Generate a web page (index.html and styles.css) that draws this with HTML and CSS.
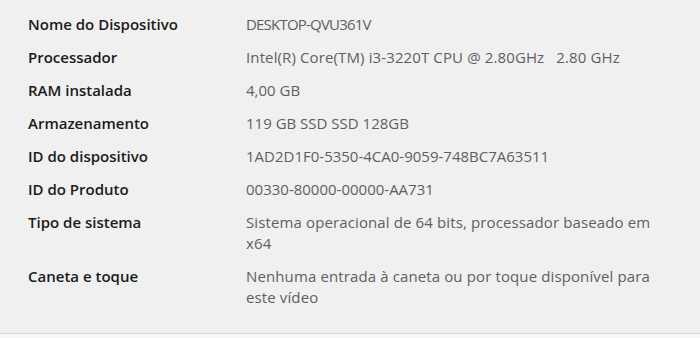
FILE: index.html
```html
<!DOCTYPE html>
<html lang="pt-BR">
<head>
<meta charset="utf-8">
<link rel="stylesheet" href="styles.css">
</head>
<body>
<div class="panel">
  <dl class="specs">
    <div class="row"><dt>Nome do Dispositivo</dt><dd class="caps">DESKTOP-QVU361V</dd></div>
    <div class="row"><dt>Processador</dt><dd class="prose">Intel(R) Core(TM) i3-3220T CPU @ 2.80GHz&nbsp;&nbsp;&nbsp;2.80 GHz</dd></div>
    <div class="row"><dt>RAM instalada</dt><dd>4,00 GB</dd></div>
    <div class="row"><dt>Armazenamento</dt><dd>119 GB SSD SSD 128GB</dd></div>
    <div class="row"><dt>ID do dispositivo</dt><dd>1AD2D1F0-5350-4CA0-9059-748BC7A63511</dd></div>
    <div class="row"><dt>ID do Produto</dt><dd>00330-80000-00000-AA731</dd></div>
    <div class="row"><dt>Tipo de sistema</dt><dd class="prose">Sistema operacional de 64 bits, processador baseado em x64</dd></div>
    <div class="row"><dt>Caneta e toque</dt><dd class="prose">Nenhuma entrada à caneta ou por toque disponível para este vídeo</dd></div>
  </dl>
</div>
</body>
</html>
```
FILE: styles.css
```css
html, body {
  margin: 0;
  padding: 0;
  background: #f6f6f6;
}
body {
  width: 700px;
  height: 338px;
  overflow: hidden;
  font-family: "Open Sans", "Noto Sans", sans-serif;
  font-size: 15px;
}
.panel {
  background: #f0f0f0;
  border-bottom: 1px solid #d6d6d6;
  padding: 8px 0 19px 0;
}
.specs {
  margin: 0;
  padding: 0 0 0 28px;
}
.row {
  display: grid;
  grid-template-columns: 218px 420px;
  padding: 6px 0;
}
dt {
  color: #1b1b1b;
  font-weight: 600;
  line-height: 21px;
}
dd {
  margin: 0;
  color: #5f5f5f;
  line-height: 21px;
}
dd.caps {
  letter-spacing: -0.8px;
}
dd.prose {
  letter-spacing: 0.12px;
}
```
